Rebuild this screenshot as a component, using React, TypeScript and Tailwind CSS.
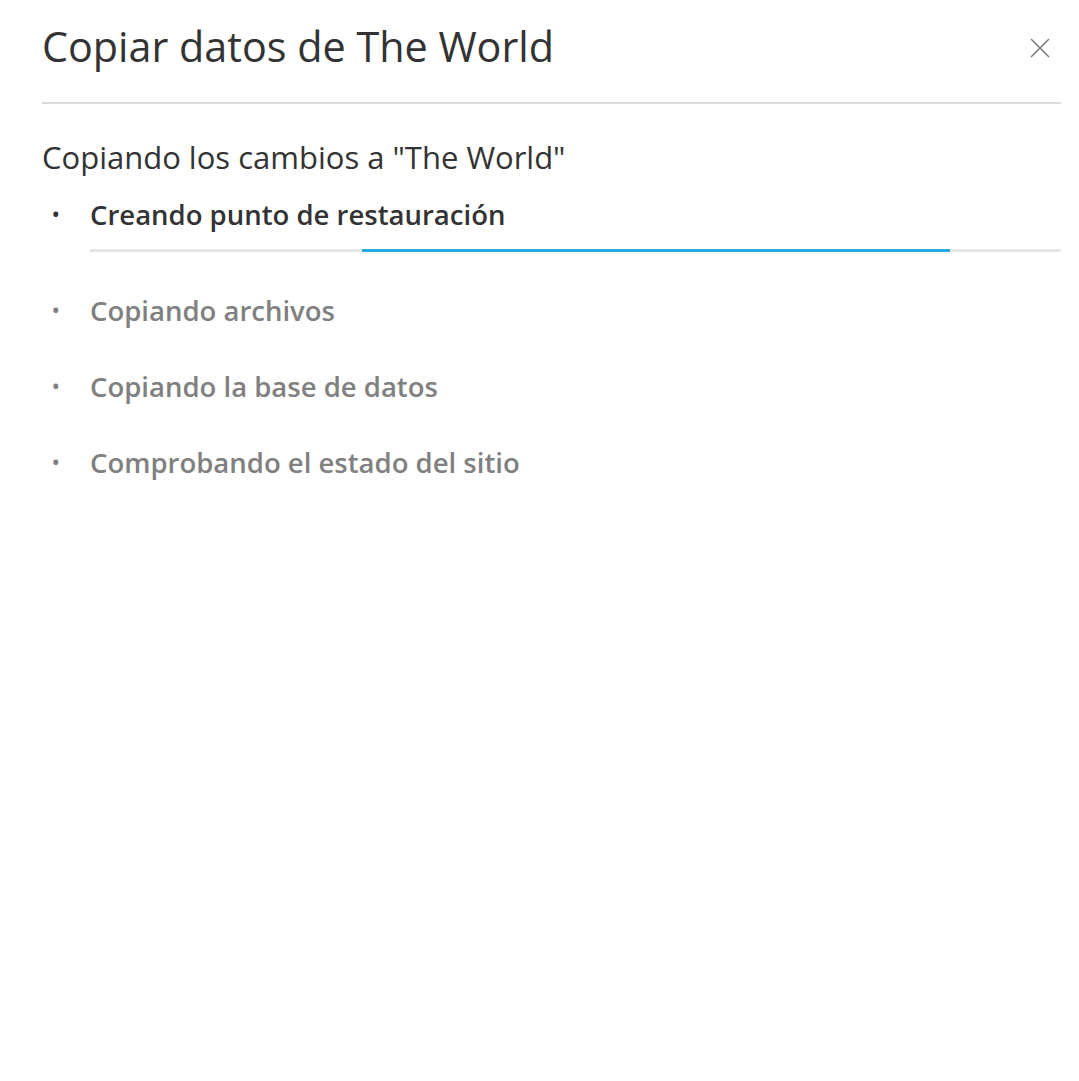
import { X } from 'lucide-react';

const steps = [
    { label: "Creando punto de restauración", active: true },
    { label: "Copiando archivos", active: false },
    { label: "Copiando la base de datos", active: false },
    { label: "Comprobando el estado del sitio", active: false },
];

const App = () => {
    return (
        <div className="w-full min-h-screen bg-white pl-[42px] pr-[18px] font-['Open_Sans',sans-serif] text-[#333]">
            <div className="flex items-center justify-between h-[104px] border-b-2 border-[#dcdcdc]">
                <h1 className="text-[41.3px] font-normal leading-none text-[#333] -mt-[8px]">Copiar datos de The World</h1>
                <button className="mr-[4px] -mt-[7px] text-[#777]">
                    <X className="w-[34px] h-[34px]" strokeWidth={1} />
                </button>
            </div>

            <p className="mt-[33px] text-[31px] leading-[40px] text-[#333]">Copiando los cambios a "The World"</p>

            <ul className="mt-[18px]">
                {steps.map((step, i) => (
                    <li key={i} className={i === 0 ? "" : i === 1 ? "mt-[39px]" : "mt-[36px]"}>
                        <div className={`flex items-center text-[27.5px] leading-[40px] font-semibold ${step.active ? "text-[#333]" : "text-[#808080]"}`}>
                            <span className="w-[48px] pl-[10px] text-[20px]">•</span>
                            <span>{step.label}</span>
                        </div>
                        {step.active && (
                            <div className="ml-[48px] mt-[14px] h-[3px] bg-[#e6e6e6] relative">
                                <div className="absolute top-0 bottom-0 left-[272px] w-[588px] bg-[#29a8df]" />
                            </div>
                        )}
                    </li>
                ))}
            </ul>
        </div>
    );
};

export default App;
